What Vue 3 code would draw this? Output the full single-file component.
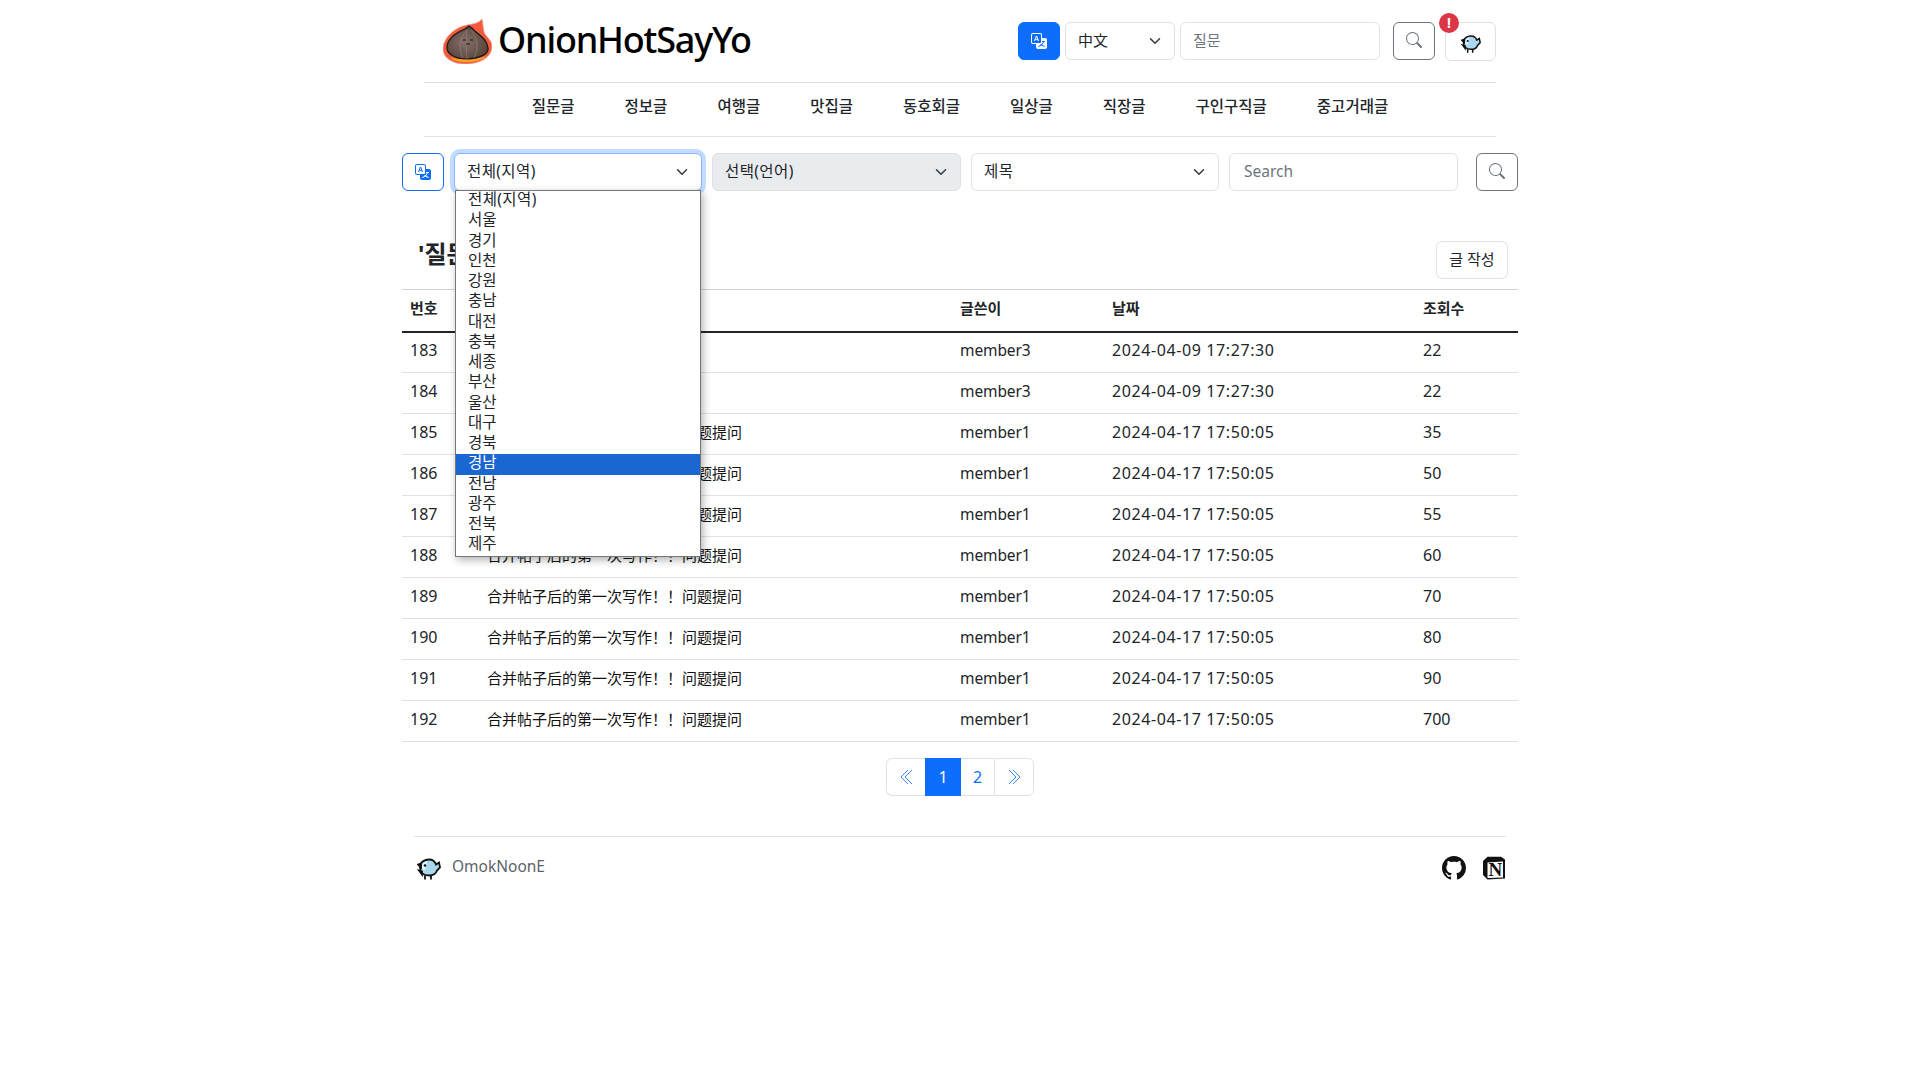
<script setup>
const nav = ['질문글','정보글','여행글','맛집글','동호회글','일상글','직장글','구인구직글','중고거래글']
const regions = ['전체(지역)','서울','경기','인천','강원','충남','대전','충북','세종','부산','울산','대구','경북','경남','전남','광주','전북','제주']
const t = '合并帖子后的第一次写作！！问题提问'
const rows = [
  [183,'','member3','2024-04-09 17:27:30',22],
  [184,'','member3','2024-04-09 17:27:30',22],
  [185,t,'member1','2024-04-17 17:50:05',35],
  [186,t,'member1','2024-04-17 17:50:05',50],
  [187,t,'member1','2024-04-17 17:50:05',55],
  [188,t,'member1','2024-04-17 17:50:05',60],
  [189,t,'member1','2024-04-17 17:50:05',70],
  [190,t,'member1','2024-04-17 17:50:05',80],
  [191,t,'member1','2024-04-17 17:50:05',90],
  [192,t,'member1','2024-04-17 17:50:05',700],
]
const searchD = 'M11.742 10.344a6.5 6.5 0 1 0-1.397 1.398h-.001c.03.04.062.078.098.115l3.85 3.85a1 1 0 0 0 1.415-1.414l-3.85-3.85a1.007 1.007 0 0 0-.115-.1zM12 6.5a5.5 5.5 0 1 1-11 0 5.5 5.5 0 0 1 11 0z'
const tr1 = 'M4.545 6.714 4.11 8H3l1.862-5h1.284L8 8H6.833l-.435-1.286H4.545zm1.634-.736L5.5 3.956h-.049l-.679 2.022H6.18z'
const tr2 = 'M0 2a2 2 0 0 1 2-2h7a2 2 0 0 1 2 2v3h3a2 2 0 0 1 2 2v7a2 2 0 0 1-2 2H7a2 2 0 0 1-2-2v-3H2a2 2 0 0 1-2-2V2zm2-1a1 1 0 0 0-1 1v7a1 1 0 0 0 1 1h7a1 1 0 0 0 1-1V2a1 1 0 0 0-1-1H2zm7.138 9.995c.193.301.402.583.63.846-.748.575-1.673 1.001-2.768 1.292.178.217.451.635.555.867 1.125-.359 2.08-.844 2.886-1.494.777.665 1.739 1.165 2.93 1.472.133-.254.414-.673.629-.89-1.125-.253-2.057-.694-2.82-1.284.681-.747 1.222-1.651 1.621-2.757H14V8h-3v1.047h.765c-.318.844-.74 1.546-1.272 2.13a6.066 6.066 0 0 1-.415-.492 1.988 1.988 0 0 1-.94.31z'
const gh = 'M8 0C3.58 0 0 3.58 0 8c0 3.54 2.29 6.53 5.47 7.59.4.07.55-.17.55-.38 0-.19-.01-.82-.01-1.49-2.01.37-2.53-.49-2.69-.94-.09-.23-.48-.94-.82-1.13-.28-.15-.68-.52-.01-.53.63-.01 1.08.58 1.23.82.72 1.21 1.87.87 2.33.66.07-.52.28-.87.51-1.07-1.78-.2-3.64-.89-3.64-3.95 0-.87.31-1.59.82-2.15-.08-.2-.36-1.02.08-2.12 0 0 .67-.21 2.2.82.64-.18 1.32-.27 2-.27.68 0 1.36.09 2 .27 1.53-1.04 2.2-.82 2.2-.82.44 1.1.16 1.92.08 2.12.51.56.82 1.27.82 2.15 0 3.07-1.87 3.75-3.65 3.95.29.25.54.73.54 1.48 0 1.07-.01 1.93-.01 2.2 0 .21.15.46.55.38A8.012 8.012 0 0 0 16 8c0-4.42-3.58-8-8-8z'
const birdBody = 'M3 10C3 4 8 2 12 2c4 0 6 2 7 5l3-2 1 5-3 3c-1 3-4 5-8 5-6 0-9-3-9-8z'
</script>

<template>
  <div class="page">
    <header class="top">
      <div class="brand">
        <svg class="onion" viewBox="0 0 49 46" width="49" height="46">
          <defs>
            <radialGradient id="onionBody" cx=".45" cy=".5" r=".6"><stop offset="0" stop-color="#85706a"/><stop offset="1" stop-color="#54423a"/></radialGradient>
          </defs>
          <path d="M39 1C36 5 30 6 24 7 12 9 0 20 0 31c0 9 10 15 22 15 14 0 27-6 27-18 0-6-6-9-8-14-1-5-1-9-2-13z" fill="#ef5b3c" stroke="#f7a594" stroke-width=".8"/>
          <path d="M8 40c6 5 26 5 34-1-8 3-26 4-34 1z" fill="#f6a623" stroke="#f6a623"/>
          <path d="M4 28c2-10 12-14 18-17l4-3 4 3c4 5 14 9 15 19 1 6-7 10-21 11C12 41 3 36 4 28z" fill="url(#onionBody)" stroke="#1c1512" stroke-width="1.2"/>
          <path d="M24 12C16 20 15 32 20 40M28 12c7 8 8 20 3 28M24 12c-1 10-1 20 0 29" fill="none" stroke="#948076" stroke-width=".7"/>
          <path d="M20 22h3M27 22h3M23 26h4" stroke="#1c1512" stroke-width="1"/>
        </svg>
        <span class="title">OnionHotSayYo</span>
      </div>
      <div class="controls">
        <button class="btn blue ic">
          <svg viewBox="0 0 16 16" width="16" height="16" fill="currentColor"><path :d="tr1"/><path :d="tr2"/></svg>
        </button>
        <div class="sel lang"><span>中文</span><svg class="chev" viewBox="0 0 16 16" width="14" height="12"><path d="m2 5 6 6 6-6" fill="none" stroke="#343a40" stroke-width="2" stroke-linecap="round" stroke-linejoin="round"/></svg></div>
        <div class="inp top-inp">질문</div>
        <button class="btn gray ic s-top">
          <svg viewBox="0 0 16 16" width="16" height="16" fill="currentColor"><path :d="searchD"/></svg>
        </button>
        <button class="btn avatar">
          <svg class="bird" viewBox="0 0 24 22" width="20" height="19">
            <path :d="birdBody" fill="#a9d8f0" stroke="#111" stroke-width="1.8"/>
            <path d="M5 8c1-3 3-4 5-4l-1 6c-1 3-3 3-4 1z" fill="#e6f5fc"/>
            <path d="M8 18v4M14 18v4M1 7l3-1v4zM2 13l3 1v3z" stroke="#111" stroke-width="1.8"/>
            <circle cx="8" cy="8" r="1.3" fill="#111"/>
          </svg>
          <span class="badge">!</span>
        </button>
      </div>
    </header>

    <nav class="nav">
      <a v-for="n in nav" :key="n">{{ n }}</a>
    </nav>

    <div class="filters">
      <button class="btn outline ic">
        <svg viewBox="0 0 16 16" width="16" height="16" fill="currentColor"><path :d="tr1"/><path :d="tr2"/></svg>
      </button>
      <div class="ddwrap">
        <div class="sel wide focus"><span class="kr">전체(지역)</span><svg class="chev" viewBox="0 0 16 16" width="14" height="12"><path d="m2 5 6 6 6-6" fill="none" stroke="#343a40" stroke-width="2" stroke-linecap="round" stroke-linejoin="round"/></svg></div>
        <ul class="menu">
          <li v-for="r in regions" :key="r" :class="{ hl: r === '경남' }">{{ r }}</li>
        </ul>
      </div>
      <div class="sel wide dis"><span class="kr">선택(언어)</span><svg class="chev" viewBox="0 0 16 16" width="14" height="12"><path d="m2 5 6 6 6-6" fill="none" stroke="#343a40" stroke-width="2" stroke-linecap="round" stroke-linejoin="round"/></svg></div>
      <div class="sel wide"><span class="kr">제목</span><svg class="chev" viewBox="0 0 16 16" width="14" height="12"><path d="m2 5 6 6 6-6" fill="none" stroke="#343a40" stroke-width="2" stroke-linecap="round" stroke-linejoin="round"/></svg></div>
      <div class="inp f-inp">Search</div>
      <button class="btn gray ic s-f">
        <svg viewBox="0 0 16 16" width="16" height="16" fill="currentColor"><path :d="searchD"/></svg>
      </button>
    </div>

    <div class="board-head">
      <h2>'질문글' 게시판</h2>
      <button class="btn write"><span>글 작성</span></button>
    </div>

    <table class="tbl">
      <colgroup><col class="c1"><col class="c2"><col class="c3"><col class="c4"><col class="c5"></colgroup>
      <thead><tr><th>번호</th><th>제목</th><th>글쓴이</th><th>날짜</th><th>조회수</th></tr></thead>
      <tbody>
        <tr v-for="r in rows" :key="r[0]">
          <td class="num">{{ r[0] }}</td><td class="ttl">{{ r[1] }}</td><td class="mem">{{ r[2] }}</td><td class="date">{{ r[3] }}</td><td class="num">{{ r[4] }}</td>
        </tr>
      </tbody>
    </table>

    <div class="pager">
      <div class="pg arrow first">
        <svg viewBox="0 0 13 16" width="13" height="16"><path d="M8 1 1 8l7 7M12 1 5 8l7 7" fill="none" stroke="#3f86fd" stroke-width="1"/></svg>
      </div>
      <div class="pg active">1</div>
      <div class="pg two">2</div>
      <div class="pg arrow last">
        <svg viewBox="0 0 13 16" width="13" height="16"><path d="m1 1 7 7-7 7M5 1l7 7-7 7" fill="none" stroke="#3f86fd" stroke-width="1"/></svg>
      </div>
    </div>

    <footer class="foot">
      <div class="foot-left">
        <svg class="bird2" viewBox="0 0 24 22" width="24" height="23">
          <path :d="birdBody" fill="#a9d8f0" stroke="#111" stroke-width="1.8"/>
          <path d="M5 8c1-3 3-4 5-4l-1 6c-1 3-3 3-4 1z" fill="#e6f5fc"/>
          <path d="M8 18v4M14 18v4M1 7l3-1v4zM2 13l3 1v3z" stroke="#111" stroke-width="1.8"/>
          <circle cx="8" cy="8" r="1.3" fill="#111"/>
        </svg>
        <span>OmokNoonE</span>
      </div>
      <div class="foot-right">
        <svg viewBox="0 0 16 16" width="24" height="24" fill="#111"><path :d="gh"/></svg>
        <svg viewBox="0 0 24 24" width="24" height="24">
          <path d="M1 5 5.500.8H19l4 2.700V22.500L5.500 23.500 1 19z" fill="#111"/>
          <path d="M5.500 6.500 21 5.600V21.500L5.500 22z" fill="#fff"/>
          <text x="13.300" y="20" text-anchor="middle" class="ntext">N</text>
        </svg>
      </div>
    </footer>
  </div>
</template>

<style>
html, body { margin: 0; background: #fff; }
</style>

<style scoped>
.page {
  width: 1116px;
  margin: 0 auto;
  font-family: "Noto Sans", "Noto Sans CJK KR", sans-serif;
  font-size: 15px;
  color: #212529;
}
button { font-family: inherit; font-size: 15px; cursor: pointer; padding: 0; background: #fff; }
.top {
  margin: 0 22px;
  height: 82px;
  border-bottom: 1px solid #dee2e6;
  display: flex;
  align-items: flex-start;
  justify-content: space-between;
}
.brand { display: flex; align-items: center; margin: 18px 0 0 19px; }
.title { font-size: 36px; font-weight: 500; line-height: 44px; margin: 0 0 2px 6px; color: #000; letter-spacing: -1.2px; }
.controls { display: flex; margin-top: 22px; align-items: flex-start; }
.btn {
  border: 1px solid #6c757d;
  border-radius: 6px;
  display: flex;
  align-items: center;
  justify-content: center;
  box-sizing: border-box;
  height: 38px;
}
.ic { width: 42px; }
.blue { background: #0d6efd; border-color: #0d6efd; color: #fff; }
.outline { border-color: #0d6efd; color: #0d6efd; }
.gray { color: #6c757d; padding-bottom: 2px; }
.sel {
  box-sizing: border-box;
  height: 38px;
  border: 1px solid #dee2e6;
  border-radius: 6px;
  display: flex;
  align-items: center;
  justify-content: space-between;
  padding: 0 12px 3px;
  background: #fff;
}
.kr { letter-spacing: .4px; font-size: 15.500px; }
.chev { flex: none; margin-top: 3px; }
.lang { width: 110px; margin-left: 5px; }
.inp {
  box-sizing: border-box;
  height: 38px;
  border: 1px solid #dee2e6;
  border-radius: 6px;
  padding: 0 12px 3px;
  display: flex;
  align-items: center;
  color: #6c757d;
}
.top-inp { width: 200px; margin-left: 5px; }
.s-top { margin-left: 13px; }
.avatar { width: 51px; height: 39px; margin-left: 10px; position: relative; border-color: #dee2e6; }
.bird { margin-top: 3px; }
.badge {
  position: absolute;
  left: -7px;
  top: -10px;
  width: 20px;
  height: 20px;
  border-radius: 50%;
  background: #dc3545;
  color: #fff;
  font-size: 14px;
  font-weight: 700;
  line-height: 20px;
  text-align: center;
}
.nav {
  margin: 0 22px;
  height: 53px;
  border-bottom: 1px solid #dee2e6;
  display: flex;
  align-items: flex-start;
  justify-content: center;
  gap: 50px;
  font-size: 15.500px;
  font-weight: 500;
  line-height: 47px;
}
.filters { display: flex; margin-top: 16px; align-items: center; }
.ddwrap { position: relative; margin-left: 10px; margin-right: 10px; }
.wide { width: 248px; }
.wide + .wide { margin-left: 10px; }
.focus { border-color: #86b7fe; box-shadow: 0 0 0 4px rgba(13,110,253,.25); }
.dis { background: #e9ecef; width: 249px; }
.f-inp { width: 229px; margin-left: 10px; padding-left: 14px; font-size: 15.500px; }
.s-f { margin-left: 18px; }
.menu {
  position: absolute;
  left: 1px;
  top: 37px;
  width: 246px;
  box-sizing: border-box;
  margin: 0;
  padding: 0;
  list-style: none;
  background: #fff;
  border: 1px solid #767676;
  box-shadow: 2px 3px 8px rgba(0,0,0,.3);
  z-index: 5;
}
.menu li { height: 20.250px; line-height: 16px; padding-left: 12px; font-size: 15.500px; white-space: nowrap; }
.menu li:first-child { letter-spacing: .4px; }
.menu li.hl { background: #1a67d2; color: #fff; }
.board-head {
  height: 98px;
  display: flex;
  justify-content: space-between;
  align-items: flex-start;
}
.board-head h2 { margin: 47px 0 0 16px; font-size: 24px; font-weight: 700; line-height: 32px; }
.write { width: 72px; margin: 50px 10px 0 0; border-color: #dee2e6; color: #212529; padding-bottom: 3px; }
.tbl {
  width: 1116px;
  border-collapse: collapse;
  table-layout: fixed;
  border-top: 1px solid #ced4da;
}
.c1 { width: 77px; } .c2 { width: 473px; } .c3 { width: 152px; } .c4 { width: 311px; } .c5 { width: 103px; }
.tbl th { height: 42px; text-align: left; padding: 0 8px 5px; border-bottom: 2px solid #212529; font-weight: 600; font-size: 15px; box-sizing: border-box; }
.tbl td { height: 41px; padding: 0 8px 4px; border-bottom: 1px solid #dee2e6; box-sizing: border-box; white-space: nowrap; overflow: hidden; }
.tbl td.ttl { font-family: "Noto Sans CJK SC", sans-serif; color: #111; padding-bottom: 6px; }
.num { font-size: 16px; }
.mem { font-size: 15.500px; letter-spacing: -.1px; }
.date { font-size: 16px; letter-spacing: .6px; }
.pager { display: flex; justify-content: center; margin-top: 16px; color: #0d6efd; font-size: 16px; }
.pg {
  box-sizing: border-box;
  height: 38px;
  border: 1px solid #dee2e6;
  display: flex;
  align-items: center;
  justify-content: center;
  background: #fff;
}
.arrow { width: 39px; }
.first { border-radius: 6px 0 0 6px; border-right: 0; }
.active { width: 36px; background: #0d6efd; border-color: #0d6efd; color: #fff; }
.two { width: 33px; border-left: 0; border-right: 0; }
.last { width: 40px; border-radius: 0 6px 6px 0; }
.foot {
  margin: 40px 12px 0;
  border-top: 1px solid #dee2e6;
  display: flex;
  justify-content: space-between;
  padding-top: 20px;
}
.foot-left { display: flex; align-items: flex-start; color: #5c636a; margin-left: 3px; }
.foot-left span { margin-left: 11px; line-height: 20px; margin-top: -1px; font-size: 15.500px; }
.foot-right { display: flex; gap: 16px; margin-top: -1px; }
.ntext { font-family: "Liberation Serif", serif; font-weight: 700; font-size: 19px; fill: #111; }
</style>
